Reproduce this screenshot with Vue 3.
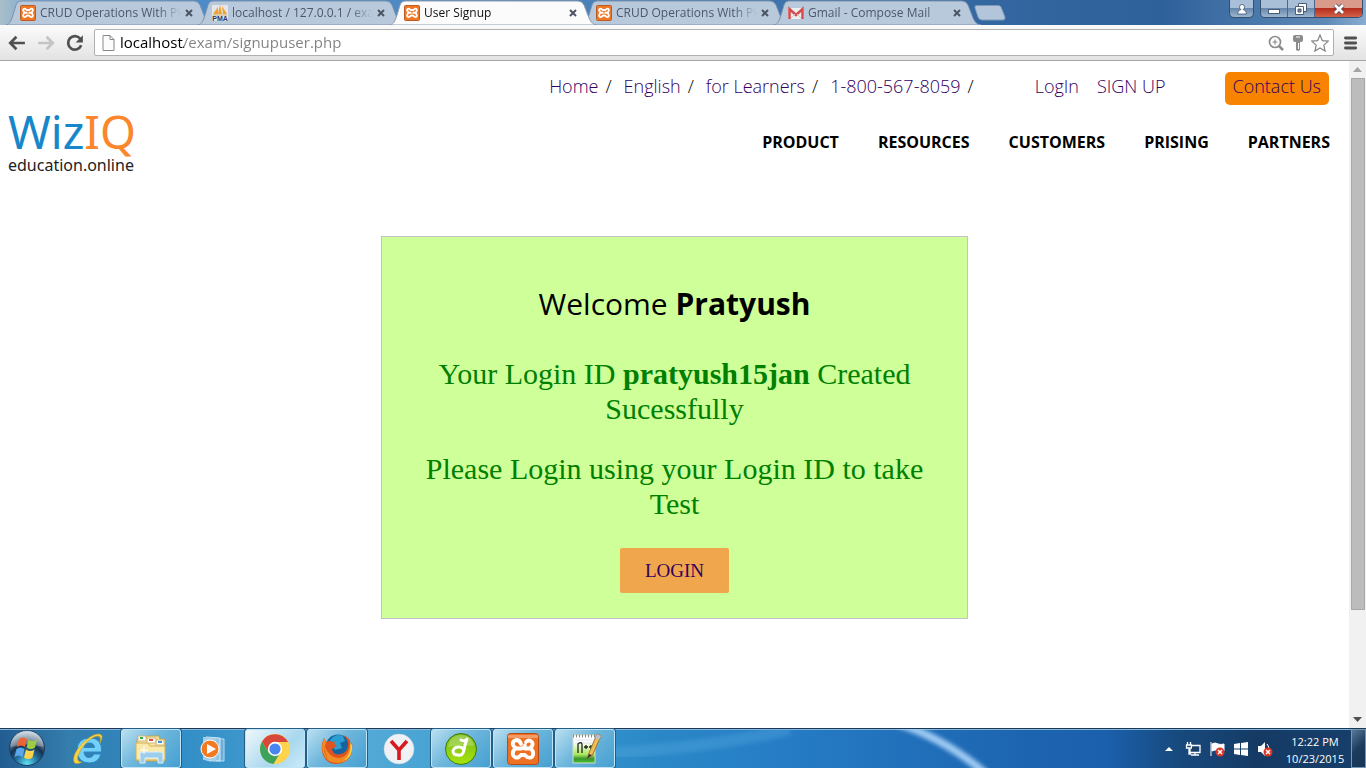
<script setup>
import { ref } from 'vue'

const tabs = [
  { title: 'CRUD Operations With PHP', icon: 'xampp' },
  { title: 'localhost / 127.0.0.1 / exam', icon: 'pma' },
  { title: 'User Signup', icon: 'xampp', active: true },
  { title: 'CRUD Operations With PHP', icon: 'xampp' },
  { title: 'Gmail - Compose Mail', icon: 'gmail' },
]
const crumbs = ['Home', 'English', 'for Learners', '1-800-567-8059']
const menu = ['PRODUCT', 'RESOURCES', 'CUSTOMERS', 'PRISING', 'PARTNERS']
const address = ref('localhost/exam/signupuser.php')
</script>

<template>
  <div class="desktop">
    <header class="tabstrip">
      <div class="tabs">
        <div v-for="(tab, i) in tabs" :key="i" class="tab" :class="{ active: tab.active }">
          <svg class="tab-shape" viewBox="0 0 208 25" preserveAspectRatio="none" aria-hidden="true">
            <path d="M0 25C4 24 5 21 7 15L10 5Q11 1 15 1H188Q192 1 194 5L199 18Q202 25 207 25Z" />
          </svg>
          <svg v-if="tab.icon === 'xampp'" class="favicon" viewBox="0 0 32 32" aria-hidden="true">
            <rect x="1" y="1" width="30" height="30" rx="2" fill="#f07825" stroke="#bd5b22" stroke-width="2" />
            <path d="M13 10Q10 6 7 8 5 11 9 15 5 20 7 23 10 26 14 21H18Q22 26 25 23 27 20 23 16 27 11 25 8 22 6 19 10ZM10 15.500h5m2 0h6" fill="none" stroke="#fff" stroke-width="3.600" stroke-linejoin="round" />
          </svg>
          <svg v-else-if="tab.icon === 'pma'" class="favicon" viewBox="0 0 16 16" aria-hidden="true">
            <rect width="16" height="16" fill="#e4e6ea" />
            <path d="M1 9 6 2V9ZM6 9 8 0 10 9ZM10 1 15 9H11Z" fill="#f1a12b" />
            <path d="M1 10H15" stroke="#d0b06d" />
            <text x="8" y="16" text-anchor="middle" font-family="Liberation Sans, sans-serif" font-size="7" font-weight="700" fill="#33375f">PMA</text>
          </svg>
          <svg v-else class="favicon" viewBox="0 0 16 16" aria-hidden="true">
            <rect y="3" width="16" height="11" fill="#eee" />
            <path d="M1.500 14V4L8 10 14.500 4V14" fill="none" stroke="#d64b4b" stroke-width="2.500" />
            <path d="m3 13 4-4m6 4L9 9" stroke="#c8cbd0" />
          </svg>
          <button class="tab-title">{{ tab.title }}</button>
          <button class="tab-close" :aria-label="'Close ' + tab.title">
            <svg viewBox="0 0 8 8" aria-hidden="true"><path d="m1 1 6 6M7 1 1 7" /></svg>
          </button>
        </div>
      </div>
      <button class="new-tab" aria-label="New tab">
        <svg viewBox="0 0 32 16" aria-hidden="true"><path d="M1 3Q0 .5 3 .5H24Q26 .5 27 2L31 12Q31.500 15 29 15H8Q5 15 4 12Z" fill="#b2c5da" stroke="#7f98b8" /></svg>
      </button>
      <div class="window-controls">
        <button class="control user" aria-label="Profile">
          <svg viewBox="0 0 12 12" aria-hidden="true"><path d="M3.500 4a2.500 2.500 0 1 1 5 0q0 1.500-1.500 2.500 3.500.5 3.500 4.500h-9q0-4 3.500-4.500Q3.500 5.500 3.500 4Z" fill="#fff" stroke="#40536d" stroke-width=".8" /></svg>
        </button>
        <div class="control-group">
          <button class="control" aria-label="Minimize">
            <svg viewBox="0 0 12 12" aria-hidden="true"><rect x=".5" y="6.500" width="11" height="4" fill="#fff" stroke="#4b5c77" /></svg>
          </button>
          <button class="control" aria-label="Restore">
            <svg viewBox="0 0 12 12" aria-hidden="true"><path d="M3.500.5h8v8h-8Z" fill="#fff" stroke="#4b5c77" /><path d="M.5 3.500h8v8h-8Z" fill="#fff" stroke="#4b5c77" /><path d="M3 6h3v3H3Z" fill="#7189a8" stroke="#4b5c77" /></svg>
          </button>
          <button class="control close" aria-label="Close window">
            <svg viewBox="0 0 12 12" aria-hidden="true"><path d="m2 2 8 8M10 2 2 10" stroke="#5a4050" stroke-width="4.400" /><path d="m2 2 8 8M10 2 2 10" stroke="#fff" stroke-width="2.800" /></svg>
          </button>
        </div>
      </div>
    </header>

    <div class="toolbar">
      <button class="tool" aria-label="Back">
        <svg viewBox="0 0 16 16" aria-hidden="true"><path d="M7.500 2.500 2 8l5.500 5.500M2.500 8H15" fill="none" stroke="#505050" stroke-width="2.400" /></svg>
      </button>
      <button class="tool" aria-label="Forward" disabled>
        <svg viewBox="0 0 16 16" aria-hidden="true"><path d="M8.500 2.500 14 8l-5.500 5.500M13.500 8H1" fill="none" stroke="#c4c4c4" stroke-width="2.400" /></svg>
      </button>
      <button class="tool" aria-label="Reload">
        <svg viewBox="0 0 16 16" aria-hidden="true"><path d="M12.700 4.200A6 6 0 1 0 13.500 10" fill="none" stroke="#505050" stroke-width="2.400" /><path d="M15 1v6.500H8.500Z" fill="#505050" /></svg>
      </button>
      <div class="omnibox">
        <svg class="page-icon" viewBox="0 0 13 16" aria-hidden="true"><path d="M1 .5h7l4 4v11H1ZM8 .5v4h4" fill="#fcfcfc" stroke="#888" /></svg>
        <input v-model="address" class="address" type="text" aria-label="Address" spellcheck="false" />
        <button class="omni" aria-label="Zoom">
          <svg viewBox="0 0 18 18" aria-hidden="true"><g fill="none" stroke="#8c8c8c"><circle cx="8" cy="8" r="5.500" stroke-width="1.700" /><path d="M5.500 8h5M8 5.500v5" stroke-width="1.200" /><path d="m12 12 4 4" stroke-width="2.500" /></g></svg>
        </button>
        <button class="omni" aria-label="Saved passwords">
          <svg viewBox="0 0 18 18" aria-hidden="true"><path d="M4 3q0-2 2-2h6q2 0 2 2v3q0 2-2 2h-1v8l-2 1-2-1V8H6Q4 8 4 6Z" fill="#8c8c8c" /><path d="M7 3h4M9.500 9v6" stroke="#fff" /></svg>
        </button>
        <button class="omni" aria-label="Bookmark this page">
          <svg viewBox="0 0 18 18" aria-hidden="true"><path d="m9 1 2.300 5.600 6 .5-4.500 4 1.300 6L9 14l-5.100 3.100 1.300-6-4.500-4 6-.5Z" fill="#fff" stroke="#858585" stroke-width="1.200" /></svg>
        </button>
      </div>
      <button class="tool menu" aria-label="Menu">
        <svg viewBox="0 0 16 16" aria-hidden="true"><path d="M4 3.500h9M4 8h9M4 12.500h9" stroke="#505050" stroke-width="2.600" stroke-linecap="round" /></svg>
      </button>
    </div>

    <div class="viewport">
      <main class="page">
        <header class="site-header">
          <a class="logo" href="#">
            <span class="logo-name">Wiz<span class="logo-iq">IQ</span></span>
            <span class="logo-tag">education.online</span>
          </a>
          <div class="site-nav">
            <div class="topbar">
              <ul class="crumbs">
                <li v-for="c in crumbs" :key="c"><a href="#">{{ c }}</a><span>/</span></li>
              </ul>
              <div class="account"><a href="#">LogIn</a><a href="#">SIGN UP</a></div>
              <a class="contact" href="#">Contact Us</a>
            </div>
            <nav class="menu-bar">
              <a v-for="m in menu" :key="m" href="#">{{ m }}</a>
            </nav>
          </div>
        </header>

        <section class="card">
          <h1>Welcome <b>Pratyush</b></h1>
          <p>Your Login ID <b>pratyush15jan</b> Created Sucessfully</p>
          <p>Please Login using your Login ID to take Test</p>
          <a class="login" href="#">LOGIN</a>
        </section>
      </main>
      <div class="scrollbar" aria-hidden="true">
        <svg class="scroll-arrow" viewBox="0 0 17 17"><path d="m4 11 4.500-5 4.500 5Z" fill="#a3a3a3" /></svg>
        <div class="track"><div class="thumb"></div></div>
        <svg class="scroll-arrow" viewBox="0 0 17 17"><path d="m4 6 4.500 5L13 6Z" fill="#505050" /></svg>
      </div>
    </div>

    <footer class="taskbar">
      <svg class="streak" viewBox="0 0 1366 40" preserveAspectRatio="none" aria-hidden="true">
        <defs><filter id="soft"><feGaussianBlur stdDeviation="2" /></filter></defs>
        <path d="M897 -6Q945 10 986 46" fill="none" stroke="#9dcaf3" stroke-width="8" filter="url(#soft)" />
        <path d="M600 26Q720 18 790 0" fill="none" stroke="#58abe0" stroke-width="12" opacity=".35" filter="url(#soft)" />
      </svg>
      <button class="start" aria-label="Start">
        <svg viewBox="0 0 38 38" aria-hidden="true">
          <defs>
            <radialGradient id="orb" cx=".5" cy=".95" r=".9"><stop offset="0" stop-color="#5fe3f5" /><stop offset=".35" stop-color="#23719f" /><stop offset=".6" stop-color="#17324f" /><stop offset="1" stop-color="#b7cad8" /></radialGradient>
          </defs>
          <circle cx="19" cy="19" r="17.500" fill="url(#orb)" stroke="#1b3c5c" />
          <path d="M2.500 18A16.500 16.500 0 0 1 35.500 18Q19 13 2.500 18Z" fill="#fff" opacity=".28" />
          <path d="M11 10q4-3 8 0l-2 8q-4-3-8 0Z" fill="#ee6434" />
          <path d="M20.500 10.500q4 3 8.500 0l-2 8q-4 3-8.500 0Z" fill="#9bcc43" />
          <path d="M8.500 20q4-3 8 0l-2 8q-4-3-8 0Z" fill="#5ba7ea" />
          <path d="M18 20.500q4 3 8.500 0l-2 8q-4 3-8.500 0Z" fill="#fcd34a" />
        </svg>
      </button>
      <div class="apps">
        <button class="app" aria-label="Internet Explorer">
          <svg viewBox="0 0 32 32" aria-hidden="true">
            <path fill-rule="evenodd" d="M28 21H21Q19.500 24.500 16 24.500 11.500 24.500 11 19H28.500Q29.500 5 17 5 4 5 4 18 5 30 16.500 30 25.500 30 28 21ZM11 14.500Q12 10 16.500 10 21 10 21.500 14.500Z" fill="#74d0f8" stroke="#268ac6" />
            <path d="M27 10Q32 1 25 1 17 2 8 12-1 22 1 29 3 32 9 29 4 29.500 4.500 24 7 15 15 8 24 1 27 4 28 6 27 10Z" fill="#f8d341" stroke="#d9a31c" stroke-width=".6" />
          </svg>
        </button>
        <button class="app open" aria-label="Explorer">
          <svg viewBox="0 0 32 32" aria-hidden="true">
            <path d="M2 6h8l2-3h12l1 3h5v22H2Z" fill="#f7e6a0" stroke="#c3a14b" />
            <path d="M3 3h8v5H3Zm9 2h9v5h-9Zm9 2h8v5h-8Z" fill="#fff" stroke="#cfb775" />
            <path d="M5 4h3v2H5Z" fill="#2bad43" /><path d="M14 6h4v2h-4Z" fill="#e34a36" /><path d="M23 8h4v2h-4Z" fill="#3b95dc" />
            <path d="M1 10h12l2 3h15v14H1Z" fill="#f8e9ab" stroke="#d0b05b" />
            <path d="M5 30V21Q5 19 8 19H25Q28 19 28 21V30H23V25H10V30Z" fill="#9ccdea" stroke="#d8f1fd" />
            <path d="M9 13v8M5 17h8" stroke="#fff" />
          </svg>
        </button>
        <button class="app" aria-label="Media Player">
          <svg viewBox="0 0 32 32" aria-hidden="true">
            <path d="m12 5 15 1v22H12Z" fill="#6dadd5" stroke="#b2dcf2" /><path d="m9 4 14 1v23L9 27Z" fill="#94c6e4" stroke="#d1eafa" /><path d="m6 4 13 1v23L6 27Z" fill="#a4cee8" />
            <circle cx="13" cy="16" r="9" fill="#f27a23" stroke="#fff" /><path d="m10 11 9 5-9 5Z" fill="#fff" />
          </svg>
        </button>
        <button class="app open current" aria-label="Chrome">
          <svg viewBox="0 0 32 32" aria-hidden="true">
            <circle cx="16" cy="16" r="15" fill="#ffd34c" />
            <path d="M3 8.500A15 15 0 0 0 14.500 31L21 20 10 20Z" fill="#3da35c" />
            <path d="M16 9h13a15 15 0 0 0-26-.5L9.500 19Z" fill="#d9463a" />
            <circle cx="16" cy="16" r="7.200" fill="#fff" /><circle cx="16" cy="16" r="5.600" fill="#4686ee" />
          </svg>
        </button>
        <button class="app open" aria-label="Firefox">
          <svg viewBox="0 0 32 32" aria-hidden="true">
            <circle cx="17" cy="14" r="12.500" fill="#16649f" /><path d="M9 7q6-7 13-4l2 5-5 2 2 5-7 2Z" fill="#2b9ed2" />
            <path d="M3 5l2 4Q8 7 11 9L14 8Q12 11 16 13L11 16Q12 23 20 21 28 19 27 9 25 4 22 2 29 4 30 12L31 9Q33 26 21 30 7 34 2 22-1 13 3 5Z" fill="#df541e" />
            <path d="M3 5l2 5Q1 20 7 25 3 20 4 14 8 24 17 25 27 25 29 12 33 28 18 30 5 30 2 20 0 13 3 5Z" fill="#f28b24" />
            <path d="M29 10q2 13-8 18 11-3 10-16Z" fill="#ffd23d" />
          </svg>
        </button>
        <button class="app" aria-label="Yandex">
          <svg viewBox="0 0 32 32" aria-hidden="true"><circle cx="16" cy="16" r="15" fill="#f0f1f4" stroke="#c7d5df" stroke-width=".5" /><path d="m8 8 8 9 8-9M16 16v11" fill="none" stroke="#d71920" stroke-width="3.600" /></svg>
        </button>
        <button class="app open" aria-label="Dreamweaver">
          <svg viewBox="0 0 32 32" aria-hidden="true">
            <defs><linearGradient id="lime" x2="0" y2="1"><stop stop-color="#75b817" /><stop offset="1" stop-color="#a7e40c" /></linearGradient></defs>
            <circle cx="16" cy="16" r="15.500" fill="url(#lime)" stroke="#3d7a12" /><path d="M3 14Q5 2 16 2t13 11Q15 11 3 14Z" fill="#fff" opacity=".25" />
            <path d="M16 7q4 2 6-1-2 5-3 11-1 6-6 5-5 0-5-4 1-4 6-4 3 0 4 2" fill="none" stroke="#fff" stroke-width="3" stroke-linecap="round" stroke-linejoin="round" />
          </svg>
        </button>
        <button class="app open" aria-label="XAMPP">
          <svg viewBox="0 0 32 32" aria-hidden="true">
            <rect x=".5" y=".5" width="31" height="31" rx="3" fill="#ed7023" stroke="#b54c15" />
            <path d="M14 11Q13 7 9 7 5 8 6 12 7 14 9 15 5 18 6 22 8 26 12 24L14 22H18L20 24Q25 26 26 22 27 18 23 15 27 12 25 9 22 6 19 9M10 15.500h4q3 0 4-3M18 15.500h5" fill="none" stroke="#fff" stroke-width="3.800" stroke-linejoin="round" stroke-linecap="round" />
            <path d="M1 2h30v3H1Z" fill="#fff" opacity=".3" />
          </svg>
        </button>
        <button class="app open" aria-label="Notepad++">
          <svg viewBox="0 0 32 32" aria-hidden="true">
            <defs><linearGradient id="note" x2="0" y2="1"><stop offset=".25" stop-color="#fff" /><stop offset=".7" stop-color="#a8e65b" /><stop offset=".85" stop-color="#36952b" /><stop offset="1" stop-color="#4ec334" /></linearGradient></defs>
            <path d="M4 2h22v28H4Z" fill="url(#note)" stroke="#d2dbc9" /><path d="M4 3h22" stroke="#888" stroke-width="3" stroke-dasharray="1 2" /><path d="M6 7h18M6 10h18" stroke="#dce3ea" />
            <path d="M9 20V11q4-3 4 1v8m2-6h4m-2-2v4m3-2h4m-2-2v4" fill="none" stroke="#222" stroke-width="1.300" />
            <path d="m18 26 2-6L28 1l4 2-9 20Z" fill="#f0bd4e" stroke="#98763b" /><path d="m28 1 4 2-2 4-4-2Z" fill="#b7c0cc" /><path d="m18 26 2-5 3 1Z" fill="#343434" />
          </svg>
        </button>
      </div>
      <div class="tray">
        <button class="tray-icon" aria-label="Show hidden icons"><svg viewBox="0 0 16 16" aria-hidden="true"><path d="m4 10 4-4 4 4Z" fill="#fff" /></svg></button>
        <button class="tray-icon" aria-label="Network"><svg viewBox="0 0 16 16" aria-hidden="true"><path d="M6 4.500h9v7H5V8M10 12v2m-4 0h8M2.500 1v3m3-3v3M1.500 4h5v3h-5Zm2.500 3v6h2" fill="none" stroke="#fff" stroke-width="1.300" /><path d="M7 6h6v4H7Z" fill="#1d3e60" /></svg></button>
        <button class="tray-icon" aria-label="Action Center"><svg viewBox="0 0 16 16" aria-hidden="true"><path d="M2 1v14M3 3q3-2 6 0 3 1 6 0v7q-3 1-6 0-3-2-6 0Z" fill="#fff" stroke="#fff" /><circle cx="11" cy="11" r="4.500" fill="#dd3428" /><path d="m9 9 4 4m0-4-4 4" stroke="#fff" stroke-width="1.500" /></svg></button>
        <button class="tray-icon" aria-label="Windows update"><svg viewBox="0 0 16 16" aria-hidden="true"><path d="m1 3 6-1v5.500H1ZM8 2l7-1v6.500H8ZM1 8.500h6V14l-6-1Zm7 0h7V15l-7-1Z" fill="#fff" /></svg></button>
        <button class="tray-icon" aria-label="Volume muted"><svg viewBox="0 0 16 16" aria-hidden="true"><path d="M1 5h3l4-4v14l-4-4H1Z" fill="#fff" /><path d="M10 3q3 3 1 6" fill="none" stroke="#fff" /><circle cx="11" cy="11" r="4.500" fill="#dd3428" /><path d="m9 9 4 4m0-4-4 4" stroke="#fff" stroke-width="1.500" /></svg></button>
      </div>
      <div class="clock"><span>12:22 PM</span><span>10/23/2015</span></div>
      <button class="show-desktop" aria-label="Show desktop"></button>
    </footer>
  </div>
</template>

<style>
body { margin: 0; }
</style>

<style scoped>
* { box-sizing: border-box; }
button { padding: 0; border: 0; background: none; font: inherit; color: inherit; }
svg { display: block; }
a { text-decoration: none; color: #32005f; }
.desktop { display: flex; flex-direction: column; height: 100vh; font-family: "Open Sans", sans-serif; color: #000; overflow: hidden; }

.tabstrip { display: flex; flex: none; height: 25px; padding-left: 6px; background: linear-gradient(90deg, #a9bfc9 0, #6fa3d6 3%, #4f8bc9 14%, #5088c1 35%, #386ca5 65%, #2e609a 85%, #5d89b6 97%, #89acd0 100%); }
.tabs { display: flex; min-width: 0; flex: 0 1 976px; }
.tab { position: relative; display: flex; align-items: center; flex: 0 1 208px; min-width: 0; height: 25px; margin-right: -16px; padding: 1px 21px 0 14px; color: #4d5869; }
.tab.active { z-index: 1; color: #111; }
.tab-shape { position: absolute; inset: 0; width: 100%; height: 100%; }
.tab-shape path { fill: #b9c9dc; stroke: #7c93ae; }
.tab.active .tab-shape path { fill: #fbfbfb; stroke: #8d9caf; }
.favicon { position: relative; flex: none; width: 16px; height: 16px; }
.tab-title { position: relative; flex: 1; min-width: 0; margin: 0 4px; overflow: hidden; white-space: nowrap; text-align: left; font-size: 12px; line-height: 16px; font-family: "Open Sans", sans-serif; -webkit-mask-image: linear-gradient(90deg, #000 84%, transparent); mask-image: linear-gradient(90deg, #000 84%, transparent); }
.tab-close { position: relative; flex: none; width: 8px; height: 8px; }
.tab-close path { stroke: #4c5564; stroke-width: 2; }
.new-tab { flex: none; width: 32px; height: 16px; margin: 5px 0 0 -8px; }
.window-controls { display: flex; gap: 6px; margin-left: auto; padding-right: 3px; }
.control-group { display: flex; height: 18px; border: 1px solid #35506f; border-top: 0; border-radius: 0 0 5px 5px; overflow: hidden; }
.control { display: grid; place-items: center; width: 27px; background: linear-gradient(#a9bfd7 0 45%, #6585aa 48%, #9cb6d0); border-right: 1px solid #4b688b; }
.control svg { width: 12px; height: 12px; }
.control.user { width: 25px; height: 18px; border: 1px solid #35506f; border-top: 0; border-radius: 0 0 5px 5px; }
.control.close { width: 47px; border: 0; background: linear-gradient(#d99a8b 0 45%, #b42b1c 48%, #d46247); }

.toolbar { display: flex; align-items: center; flex: none; height: 36px; padding: 0 7px 0 8px; border-bottom: 1px solid #a5a5a5; background: linear-gradient(#fbfbfb, #e3e3e3); }
.tool { width: 18px; height: 18px; margin-right: 11px; }
.tool svg { width: 18px; height: 18px; }
.omnibox { display: flex; align-items: center; flex: 1; min-width: 0; height: 27px; margin: 0 7px 0 -1px; padding: 0 4px 0 7px; border: 1px solid #b0b0b0; border-radius: 2px; background: #fff; }
.page-icon { flex: none; width: 13px; height: 16px; margin-right: 5px; }
.address { flex: 1; min-width: 0; height: 23px; padding: 0; border: 0; outline: 0; font: 15px/23px "Open Sans", sans-serif; color: transparent; background: linear-gradient(90deg, #000 64px, #808080 64px); -webkit-background-clip: text; background-clip: text; }
.omni { width: 18px; height: 18px; margin-left: 4px; }
.omni svg { width: 18px; height: 18px; }
.tool.menu { margin: 0; }

.viewport { display: flex; flex: 1; min-height: 0; }
.page { flex: 1; min-width: 0; overflow: hidden; background: #fff; }
.site-header { display: flex; justify-content: space-between; padding: 11px 19px 0 8px; }
.logo { display: flex; flex-direction: column; margin-top: 35px; font-family: "Noto Sans", sans-serif; }
.logo-name { font-size: 46px; line-height: 49px; color: #1787c9; }
.logo-iq { color: #fb862b; }
.logo-tag { font-size: 16px; line-height: 18px; color: #222; }
.site-nav { display: flex; flex-direction: column; align-items: flex-end; }
.topbar { display: flex; align-items: flex-start; padding-right: 1px; font-size: 18px; line-height: 29px; font-weight: 300; }
.crumbs { display: flex; gap: 12px; margin: 0 61px 0 0; padding: 0; list-style: none; }
.crumbs span { margin-left: 7px; }
.account { display: flex; gap: 18px; margin-right: 59px; }
.contact { height: 33px; padding: 0 8px; border-radius: 5px; background: #f88300; }
.menu-bar { display: flex; gap: 39px; margin-top: 25px; font-size: 16px; line-height: 24px; font-weight: 700; }
.menu-bar a { color: #000; }

.card { width: 587px; max-width: 100%; margin: 62px auto 0; padding: 42px 40px 25px; border: 1px solid #c9bfc9; background: #cfff99; text-align: center; font-family: "Liberation Serif", serif; }
.card h1 { margin: 0 0 27px; font: 400 30px/50px "Open Sans", sans-serif; }
.card h1 b { font-weight: 700; }
.card p { margin: 0 0 25px; font-size: 30px; line-height: 35px; color: #008000; }
.card p:last-of-type { margin-bottom: 27px; }
.login { display: inline-block; padding: 0 25px; border-radius: 2px; background: #efa64d; font-size: 19px; line-height: 45px; vertical-align: top; }

.scrollbar { display: flex; flex-direction: column; flex: none; width: 17px; background: #f1f1f1; }
.scroll-arrow { flex: none; width: 17px; height: 17px; }
.track { flex: 1; }
.thumb { height: 84%; margin: 0 1px 0 2px; border: 1px solid #a8a8a8; background: #bcbcbc; }

.taskbar { position: relative; display: flex; flex: none; height: 40px; border-top: 1px solid #1d3853; box-shadow: inset 0 1px #86b8e2; background: linear-gradient(90deg, #225d91 0, #347dad 5%, #2f8bc5 12%, #52a9d6 27%, #399bd0 39%, #2b88c7 48%, #267dc6 57%, #1d64b0 75%, #1b60ac 81%, #174a7f 86%, #153b65 92%, #163f69 100%); }
.streak { position: absolute; inset: 0; width: 100%; height: 100%; }
.start { position: relative; width: 38px; height: 38px; margin: 0 13px 0 8px; }
.apps { position: relative; display: flex; gap: 2px; }
.app { display: grid; place-items: center; width: 60px; height: 39px; }
.app svg { width: 32px; height: 32px; }
.app.open { border: 1px solid #c0e4f7; border-radius: 3px; box-shadow: 0 0 0 1px #245e85; background: linear-gradient(135deg, #b9dff0 0, #6eb6dc 45%, #46a0d1 100%); }
.app.current { background: linear-gradient(135deg, #eff8fc, #a9d7ed 60%, #c9ebf8); }
.tray { position: relative; display: flex; align-items: center; gap: 8px; margin-left: auto; padding-right: 10px; }
.tray-icon { width: 16px; height: 16px; }
.clock { position: relative; display: flex; flex-direction: column; width: 64px; padding-top: 4px; text-align: center; font-size: 11px; line-height: 17px; color: #fff; white-space: nowrap; }
.show-desktop { position: relative; width: 15px; margin-left: 4px; border: 1px solid #7597b8; background: linear-gradient(135deg, #5a7898, #1c3b5d 50%, #183756); }
</style>
